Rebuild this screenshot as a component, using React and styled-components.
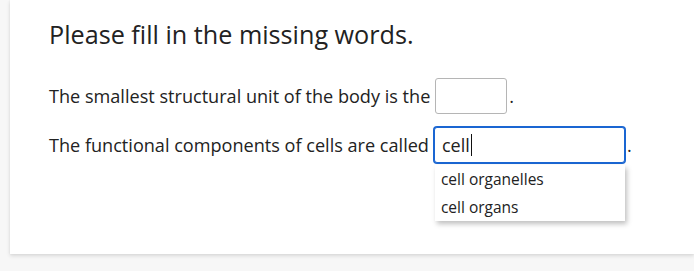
import React, { useState } from "react"
import styled, { createGlobalStyle } from "styled-components"

const GlobalStyle = createGlobalStyle`
  html, body {
    margin: 0;
    padding: 0;
    background: #f7f7f7;
    font-family: "Open Sans", "Liberation Sans", sans-serif;
    color: #222;
  }
`

const Page = styled.div`
  width: 694px;
  height: 271px;
  overflow: hidden;
  padding-left: 10px;
  box-sizing: border-box;
`

const Card = styled.div`
  background: #fff;
  height: 254px;
  box-sizing: border-box;
  padding: 16px 0 0 39px;
  box-shadow: 0 2px 4px rgba(0, 0, 0, 0.12), 0 0 2px rgba(0, 0, 0, 0.06);
`

const Title = styled.h1`
  margin: 0 0 26px;
  font-size: 25.2px;
  font-weight: 400;
  line-height: 36px;
  color: #222;
`

const Sentence = styled.div`
  display: flex;
  align-items: center;
  height: 36px;
  margin-bottom: 13px;
  font-size: 18.1px;
  color: #222;
`

const Gap = styled.div`
  position: relative;
  margin-left: 5px;
`

const Field = styled.input`
  box-sizing: border-box;
  width: ${p => p.$width}px;
  height: 36px;
  padding: 0 7px;
  font-family: inherit;
  font-size: 18px;
  color: #222;
  border: 1px solid ${p => (p.$focused ? "#1a66d2" : "#b5b5b5")};
  border-radius: 3px;
  outline: none;
  box-shadow: ${p => (p.$focused ? "0 0 0 1px #1a66d2" : "none")};
  background: #fff;
  caret-color: transparent;
`

const Mirror = styled.span`
  position: absolute;
  top: 7px;
  left: 8px;
  height: 22px;
  display: flex;
  align-items: center;
  font-size: 18px;
  pointer-events: none;
`

const Hidden = styled.span`
  visibility: hidden;
  white-space: pre;
`

const Caret = styled.span`
  width: 1px;
  height: 22px;
  margin-left: 1px;
  background: #111;
`

const Dot = styled.span`
  margin-left: 2px;
`

const Suggestions = styled.ul`
  position: absolute;
  top: 38px;
  left: 1px;
  width: 190px;
  margin: 0;
  padding: 0;
  list-style: none;
  background: #fff;
  box-shadow: 2px 3px 5px rgba(0, 0, 0, 0.25);
`

const Suggestion = styled.li`
  height: 28px;
  line-height: 28px;
  padding: 0 6px;
  font-size: 15.5px;
  color: #222;
`

export default function App() {
  const [answer, setAnswer] = useState("cell")
  const options = ["cell organelles", "cell organs"]

  return (
    <>
      <GlobalStyle />
      <Page>
        <Card>
          <Title>Please fill in the missing words.</Title>
          <Sentence>
            The smallest structural unit of the body is the
            <Gap>
              <Field $width={72} />
            </Gap>
            <Dot>.</Dot>
          </Sentence>
          <Sentence>
            The functional components of cells are called
            <Gap>
              <Field
                $width={191}
                $focused
                value={answer}
                onChange={e => setAnswer(e.target.value)}
              />
              <Mirror>
                <Hidden>{answer}</Hidden>
                <Caret />
              </Mirror>
              <Suggestions>
                {options.map(o => (
                  <Suggestion key={o}>{o}</Suggestion>
                ))}
              </Suggestions>
            </Gap>
            <Dot>.</Dot>
          </Sentence>
        </Card>
      </Page>
    </>
  )
}
